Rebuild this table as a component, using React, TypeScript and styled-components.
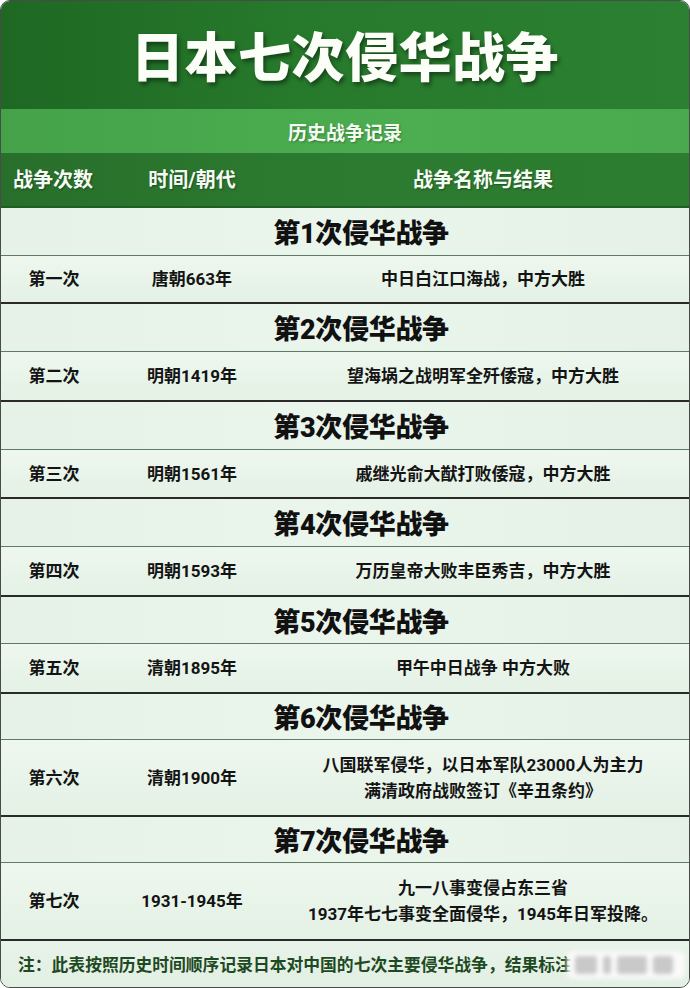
import React from 'react';
import styled, { createGlobalStyle } from 'styled-components';

const Global = createGlobalStyle`
    html, body { margin:0; padding:0; background:#fff; }
    body { font-family:Roboto, "Noto Sans CJK SC", sans-serif; }
    * { box-sizing:border-box; }
`

const Card = styled.div`
    width:690px;
    height:988px;
    border:1px solid #4a4a4a;
    border-radius:10px;
    overflow:hidden;
    display:flex;
    flex-direction:column;
    background:#e9f4ea;
`

const TitleBand = styled.div`
    height:108px;
    display:flex;
    align-items:center;
    justify-content:center;
    background:linear-gradient(90deg, #1e6823 0%, #277a2c 45%, #2c8031 100%);
    color:#fbfff8;
    font-size:53px;
    font-weight:900;
    letter-spacing:0.5px;
    text-shadow:2px 3px 4px rgba(0,0,0,0.45);
    padding-bottom:2px;
`

const SubBand = styled.div`
    height:44px;
    display:flex;
    align-items:center;
    justify-content:center;
    background:linear-gradient(90deg, #45a249, #4cae50 60%, #4aa94e);
    color:#f2fbf0;
    font-size:19px;
    font-weight:700;
    text-shadow:1px 1px 2px rgba(0,0,0,0.3);
`

const Grid = styled.div<{ h: number; head?: boolean }>`
    display:grid;
    grid-template-columns:106px 170px 1fr;
    align-items:center;
    height:${p => p.h}px;
    ${p => p.head ? `
        background:linear-gradient(90deg, #286f2c, #2c7b30 50%, #2d7d31);
        color:#f4fbf2;
        font-size:20px;
        text-shadow:1px 1px 2px rgba(0,0,0,0.35);
        border-bottom:2px solid #205f23;
    ` : `
        background:linear-gradient(180deg, #eef7ee, #e4f1e5);
        color:#141414;
        font-size:17px;
        border-bottom:2px solid #2a2a2a;
    `}
    font-weight:700;
`

const Cell = styled.div<{ align?: 'left' | 'center' }>`
    text-align:${p => p.align || 'center'};
    padding-left:${p => p.align === 'left' ? '12px' : '0'};
    line-height:26px;
`

const SectionHead = styled.div<{ h: number }>`
    height:${p => p.h}px;
    display:flex;
    align-items:center;
    justify-content:center;
    padding-left:32px;
    background:linear-gradient(90deg, #e6f2e7, #eaf5ec 50%, #e5f1e6);
    border-bottom:1px solid #5f7a66;
    font-size:27px;
    font-weight:900;
    color:#111;
    letter-spacing:-0.3px;
`

const Footer = styled.div`
    position:relative;
    flex:1;
    display:flex;
    align-items:center;
    padding:0 0 0 17px;
    font-size:16.8px;
    font-weight:700;
    color:#1d4a22;
    white-space:nowrap;
    overflow:hidden;
    background:linear-gradient(180deg, #e8f3e9, #e2efe3);
`

const Watermark = styled.div`
    position:absolute;
    left:566px;
    top:10px;
    width:118px;
    height:28px;
    background:rgba(250,250,250,0.95);
    border-radius:6px;
    filter:blur(2px);
    display:flex;
    align-items:center;
    gap:6px;
    padding:0 8px;
`

const Smudge = styled.span<{ w: number }>`
    display:block;
    width:${p => p.w}px;
    height:18px;
    background:#c9c9c9;
    border-radius:3px;
`

type War = { no: string; time: string; lines: string[]; hh: number; dh: number }

const wars: War[] = [
    { no: '第一次', time: '唐朝663年', lines: ['中日白江口海战，中方大胜'], hh: 48, dh: 48 },
    { no: '第二次', time: '明朝1419年', lines: ['望海埚之战明军全歼倭寇，中方大胜'], hh: 48, dh: 50 },
    { no: '第三次', time: '明朝1561年', lines: ['戚继光俞大猷打败倭寇，中方大胜'], hh: 48, dh: 49 },
    { no: '第四次', time: '明朝1593年', lines: ['万历皇帝大败丰臣秀吉，中方大胜'], hh: 48, dh: 50 },
    { no: '第五次', time: '清朝1895年', lines: ['甲午中日战争 中方大败'], hh: 47, dh: 50 },
    { no: '第六次', time: '清朝1900年', lines: ['八国联军侵华，以日本军队23000人为主力', '满清政府战败签订《辛丑条约》'], hh: 46, dh: 77 },
    { no: '第七次', time: '1931-1945年', lines: ['九一八事变侵占东三省', '1937年七七事变全面侵华，1945年日军投降。'], hh: 46, dh: 78 },
]

const App: React.FC = () => {
    return <>
        <Global />
        <Card>
            <TitleBand>日本七次侵华战争</TitleBand>
            <SubBand>历史战争记录</SubBand>
            <Grid h={55} head>
                <Cell align='left'>战争次数</Cell>
                <Cell>时间/朝代</Cell>
                <Cell>战争名称与结果</Cell>
            </Grid>
            {wars.map((w, i) => <React.Fragment key={w.no}>
                <SectionHead h={w.hh}>第{i + 1}次侵华战争</SectionHead>
                <Grid h={w.dh}>
                    <Cell>{w.no}</Cell>
                    <Cell>{w.time}</Cell>
                    <Cell>{w.lines.map(l => <div key={l}>{l}</div>)}</Cell>
                </Grid>
            </React.Fragment>)}
            <Footer>
                注：此表按照历史时间顺序记录日本对中国的七次主要侵华战争，结果标注
                <Watermark>
                    <Smudge w={22} />
                    <Smudge w={8} />
                    <Smudge w={30} />
                    <Smudge w={20} />
                </Watermark>
            </Footer>
        </Card>
    </>
}

export default App;
